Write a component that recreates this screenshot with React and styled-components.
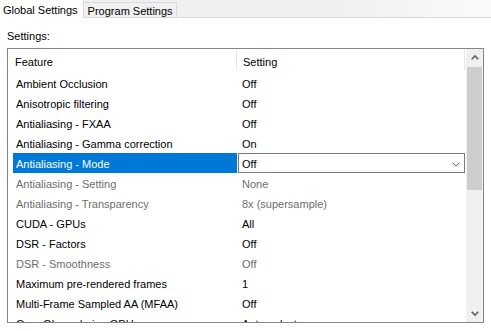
import React from 'react'
import styled, { createGlobalStyle } from 'styled-components'

const GlobalStyle = createGlobalStyle`
  html, body {
    margin: 0;
    padding: 0;
    background: #ffffff;
  }
  body {
    font-family: "Liberation Sans", Arial, sans-serif;
    font-size: 11px;
    color: #000;
  }
`

const Window = styled.div`
  width: 491px;
  height: 331px;
  overflow: hidden;
  background: #ffffff;
  display: flex;
  flex-direction: column;
`

const TabStrip = styled.div`
  display: flex;
  align-items: flex-end;
  height: 18px;
  background: linear-gradient(to right, #f0f0f0, #f0f0f0 70%, #fafafa);
`

const Tab = styled.div`
  box-sizing: border-box;
  display: flex;
  align-items: center;
  white-space: nowrap;
  height: ${p => (p.active ? '18px' : '16px')};
  padding: ${p => (p.active ? '1px 5px 0 3px' : '1px 3px 0 4px')};
  background: ${p => (p.active ? '#ffffff' : '#f0f0f0')};
  border-right: 1px solid #d9d9d9;
  border-top: ${p => (p.active ? 'none' : '1px solid #d9d9d9')};
  border-bottom: ${p => (p.active ? 'none' : '1px solid #d9d9d9')};
`

const TabFiller = styled.div`
  flex: 1;
  align-self: stretch;
  border-bottom: 1px solid #d9d9d9;
`

const Panel = styled.div`
  flex: 1;
  padding: 11px 0 0 7px;
`

const Label = styled.div`
  line-height: 15px;
  margin-bottom: 4px;
`

const ListBox = styled.div`
  box-sizing: border-box;
  width: 477px;
  height: 275px;
  border: 1px solid #828790;
  display: flex;
  overflow: hidden;
`

const Content = styled.div`
  flex: 1;
  overflow: hidden;
`

const Header = styled.div`
  display: flex;
  height: 24px;
  align-items: stretch;
`

const HeaderCell = styled.div`
  box-sizing: border-box;
  width: ${p => p.w}px;
  display: flex;
  align-items: center;
  padding: 2px 0 0 ${p => p.pad}px;
  position: relative;
  &::after {
    content: '';
    position: absolute;
    right: 0;
    top: 1px;
    bottom: 3px;
    width: 1px;
    background: #e5e5e5;
  }
`

const Row = styled.div`
  display: flex;
  height: 20px;
  margin-left: 5px;
  color: ${p => (p.disabled ? '#6d6d6d' : '#000')};
`

const FeatureCell = styled.div`
  box-sizing: border-box;
  width: 224px;
  padding: 2px 0 0 3px;
  display: flex;
  align-items: center;
  white-space: nowrap;
  background: ${p => (p.selected ? '#0078d7' : 'transparent')};
  color: ${p => (p.selected ? '#ffffff' : 'inherit')};
`

const SettingCell = styled.div`
  box-sizing: border-box;
  width: 227px;
  padding: 2px 0 0 4px;
  display: flex;
  align-items: center;
  white-space: nowrap;
  margin-left: 1px;
`

const Combo = styled.div`
  box-sizing: border-box;
  width: 227px;
  height: 20px;
  margin-left: 1px;
  border: 1px solid #7a7a7a;
  background: #fff;
  display: flex;
  align-items: center;
  justify-content: space-between;
  padding: 2px 4px 0 3px;
`

const ScrollBar = styled.div`
  width: 17px;
  background: #f0f0f0;
  display: flex;
  flex-direction: column;
`

const ScrollButton = styled.div`
  height: 17px;
  display: flex;
  align-items: center;
  justify-content: center;
`

const Track = styled.div`
  flex: 1;
  padding: 1px 1px 0 1px;
`

const Thumb = styled.div`
  height: 123px;
  background: #cdcdcd;
`

const Chevron = ({ up, color = '#606060', w = 8, h = 5, sw = 1.6 }) => (
  <svg width={w} height={h} viewBox={`0 0 ${w} ${h}`}>
    <polyline
      points={up ? `0.7,${h - 0.7} ${w / 2},0.9 ${w - 0.7},${h - 0.7}` : `0.7,0.7 ${w / 2},${h - 0.9} ${w - 0.7},0.7`}
      fill="none"
      stroke={color}
      strokeWidth={sw}
    />
  </svg>
)

const rows = [
  ['Ambient Occlusion', 'Off'],
  ['Anisotropic filtering', 'Off'],
  ['Antialiasing - FXAA', 'Off'],
  ['Antialiasing - Gamma correction', 'On'],
  ['Antialiasing - Mode', 'Off', 'selected'],
  ['Antialiasing - Setting', 'None', 'disabled'],
  ['Antialiasing - Transparency', '8x (supersample)', 'disabled'],
  ['CUDA - GPUs', 'All'],
  ['DSR - Factors', 'Off'],
  ['DSR - Smoothness', 'Off', 'disabled'],
  ['Maximum pre-rendered frames', '1'],
  ['Multi-Frame Sampled AA (MFAA)', 'Off'],
  ['OpenGL rendering GPU', 'Auto-select'],
]

export default function App() {
  return (
    <Window>
      <GlobalStyle />
      <TabStrip>
        <Tab active>Global Settings</Tab>
        <Tab>Program Settings</Tab>
        <TabFiller />
      </TabStrip>
      <Panel>
        <Label>Settings:</Label>
        <ListBox>
          <Content>
            <Header>
              <HeaderCell w={229} pad={7}>Feature</HeaderCell>
              <HeaderCell w={228} pad={6}>Setting</HeaderCell>
            </Header>
            {rows.map(([feature, setting, state]) => (
              <Row key={feature} disabled={state === 'disabled'}>
                <FeatureCell selected={state === 'selected'}>{feature}</FeatureCell>
                {state === 'selected' ? (
                  <Combo>
                    <span>{setting}</span>
                    <Chevron w={8} h={5} sw={1} />
                  </Combo>
                ) : (
                  <SettingCell>{setting}</SettingCell>
                )}
              </Row>
            ))}
          </Content>
          <ScrollBar>
            <ScrollButton>
              <Chevron up />
            </ScrollButton>
            <Track>
              <Thumb />
            </Track>
            <ScrollButton>
              <Chevron />
            </ScrollButton>
          </ScrollBar>
        </ListBox>
      </Panel>
    </Window>
  )
}
